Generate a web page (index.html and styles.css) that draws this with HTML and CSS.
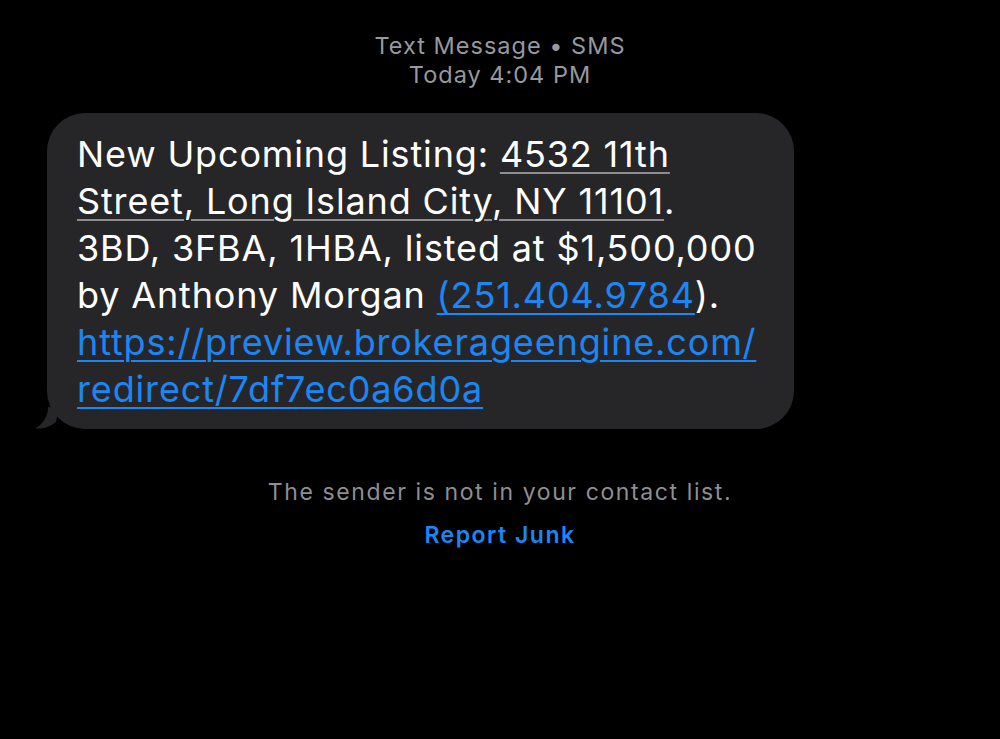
FILE: index.html
```html
<!DOCTYPE html>
<html>
<head>
<meta charset="utf-8">
<link rel="stylesheet" href="styles.css">
</head>
<body>
<div class="screen">
  <header class="meta">
    <div>Text Message • SMS</div>
    <div>Today <span class="time">4:04 PM</span></div>
  </header>
  <div class="thread">
    <div class="bubble">
      <p class="msg">New Upcoming Listing: <span class="addr">4532 11th</span><br><span class="addr">Street, Long Island City, NY 11101</span>.<br>3BD, 3FBA, 1HBA, listed at $1,500,000<br>by Anthony Morgan <span class="link">(251.404.9784</span>).<br><span class="link">https://preview.brokerageengine.com/</span><br><span class="link">redirect/7df7ec0a6d0a</span></p>
      <svg class="tail" width="24" height="22" viewBox="0 0 24 22"><path d="M13 0 C13 10 8 17 0 21.5 C8 22 15 20 21 15 L24 0 Z" fill="#262628"/></svg>
    </div>
  </div>
  <footer class="notice">
    <div class="note">The sender is not in your contact list.</div>
    <div class="junk">Report Junk</div>
  </footer>
</div>
</body>
</html>
```
FILE: styles.css
```css
html, body {
  margin: 0;
  padding: 0;
  background: #000;
}
.screen {
  width: 1000px;
  height: 739px;
  background: #000;
  font-family: "Inter", "Roboto", "Liberation Sans", sans-serif;
  display: flex;
  flex-direction: column;
}
.meta {
  padding-top: 31px;
  text-align: center;
  color: #98989e;
  font-size: 23.5px;
  letter-spacing: 1px;
  line-height: 29px;
}
.thread {
  padding: 24px 0 0 47px;
}
.bubble {
  position: relative;
  width: 747px;
  box-sizing: border-box;
  background: #262628;
  border-radius: 38px;
  padding: 18px 20px 16px 30px;
}
.msg {
  margin: 0;
  color: #fff;
  font-size: 36px;
  line-height: 47px;
  white-space: nowrap;
  letter-spacing: 0.85px;
}
.addr {
  text-decoration: underline;
  text-decoration-color: #8d8d90;
  text-decoration-thickness: 2px;
  text-underline-offset: 5px;
}
.link {
  color: #1b86f5;
  text-decoration: underline;
  text-decoration-thickness: 2px;
  text-underline-offset: 5px;
}
.tail {
  position: absolute;
  left: -12px;
  bottom: 0;
}
.notice {
  text-align: center;
  padding-top: 49px;
}
.note {
  color: #8e8e93;
  font-size: 23px;
  letter-spacing: 1.6px;
  line-height: 28px;
}
.junk {
  color: #1b86f5;
  font-size: 23px;
  font-weight: 600;
  letter-spacing: 1.5px;
  line-height: 28px;
  margin-top: 15px;
}
```
